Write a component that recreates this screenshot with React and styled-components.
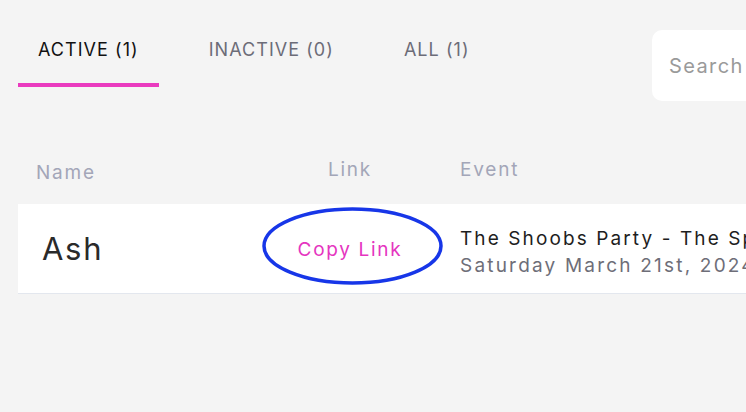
import React, { useState } from 'react'
import styled, { createGlobalStyle } from 'styled-components'

const GlobalStyle = createGlobalStyle`
  html, body {
    margin: 0;
    padding: 0;
    background: #f4f4f4;
    overflow: hidden;
  }
  body {
    font-family: Inter, "Noto Sans", sans-serif;
  }
`

const tabs = [
  { key: 'active', label: 'ACTIVE (1)' },
  { key: 'inactive', label: 'INACTIVE (0)' },
  { key: 'all', label: 'ALL (1)' },
]

const App = () => {
  const [tab, setTab] = useState('active')

  return (
    <Page>
      <GlobalStyle />
      <Toolbar>
        <Tabs>
          {tabs.map(t => (
            <Tab key={t.key} $active={tab === t.key} onClick={() => setTab(t.key)}>
              {t.label}
            </Tab>
          ))}
        </Tabs>
        <Search placeholder="Search" />
      </Toolbar>

      <Table>
        <HeadRow>
          <HeadCell $low>Name</HeadCell>
          <HeadCell $center>Link</HeadCell>
          <HeadCell $event>Event</HeadCell>
        </HeadRow>
        <Row>
          <NameCell>Ash</NameCell>
          <LinkCell>
            <Circle viewBox="0 0 181 78" aria-hidden="true">
              <ellipse cx="90.5" cy="39" rx="88.5" ry="37" fill="none" stroke="#1736e8" strokeWidth="3.5" />
            </Circle>
            <CopyLink>Copy Link</CopyLink>
          </LinkCell>
          <EventCell>
            <EventTitle>The Shoobs Party - The Spring Edition</EventTitle>
            <EventDate>Saturday March 21st, 2024</EventDate>
          </EventCell>
        </Row>
      </Table>
    </Page>
  )
}

const Page = styled.div`
  padding: 30px 0 0 18px;
  width: 1000px;
`

const Toolbar = styled.div`
  display: flex;
  align-items: flex-start;
  width: 934px;
`

const Tabs = styled.div`
  display: flex;
  gap: 30px;
  flex: none;
`

const Tab = styled.button`
  background: none;
  border: none;
  border-bottom: 4px solid ${p => (p.$active ? '#ea3bbf' : 'transparent')};
  padding: 10px 20px 23px;
  font-family: inherit;
  font-size: 18px;
  line-height: 20px;
  letter-spacing: 1.05px;
  white-space: nowrap;
  color: ${p => (p.$active ? '#111' : '#6c6c78')};
  cursor: pointer;
`

const Search = styled.input`
  margin-left: auto;
  flex: none;
  width: 300px;
  height: 71px;
  box-sizing: border-box;
  border: none;
  border-radius: 10px;
  background: #fff;
  padding: 0 17px;
  font-family: inherit;
  font-size: 20px;
  letter-spacing: 1.4px;
  outline: none;
  &::placeholder {
    color: #9a9a9a;
  }
`

const Table = styled.div`
  margin-top: 49px;
  width: 728px;
`

const HeadRow = styled.div`
  display: grid;
  grid-template-columns: 262px 140px 1fr;
  height: 54px;
  padding-top: 10px;
  box-sizing: border-box;
`

const HeadCell = styled.div`
  font-size: 19px;
  line-height: 20px;
  letter-spacing: 1.8px;
  color: #a3a6b8;
  padding-left: ${p => (p.$event ? '40px' : p.$center ? '0' : '18px')};
  text-align: ${p => (p.$center ? 'center' : 'left')};
  margin-top: ${p => (p.$low ? '3px' : '0')};
`

const Row = styled.div`
  display: grid;
  grid-template-columns: 262px 140px 1fr;
  align-items: center;
  height: 90px;
  box-sizing: border-box;
  background: #fff;
  border-bottom: 1px solid #e3e7ee;
`

const NameCell = styled.div`
  padding-left: 24px;
  font-size: 31px;
  color: #2a2a2a;
  letter-spacing: 1.7px;
`

const LinkCell = styled.div`
  position: relative;
  height: 100%;
  display: flex;
  align-items: center;
  justify-content: center;
`

const Circle = styled.svg`
  position: absolute;
  left: -18px;
  top: 3px;
  width: 181px;
  height: 78px;
  pointer-events: none;
`

const CopyLink = styled.span`
  font-size: 19px;
  letter-spacing: 1.7px;
  color: #e535c0;
  margin-top: 2px;
  cursor: pointer;
`

const EventCell = styled.div`
  padding-left: 40px;
  display: flex;
  flex-direction: column;
  gap: 4px;
  white-space: nowrap;
  overflow: hidden;
  margin-top: 6px;
`

const EventTitle = styled.div`
  font-size: 19px;
  letter-spacing: 2.1px;
  color: #1e1e1e;
`

const EventDate = styled.div`
  font-size: 19px;
  letter-spacing: 2.2px;
  color: #6e6e78;
`

export default App
